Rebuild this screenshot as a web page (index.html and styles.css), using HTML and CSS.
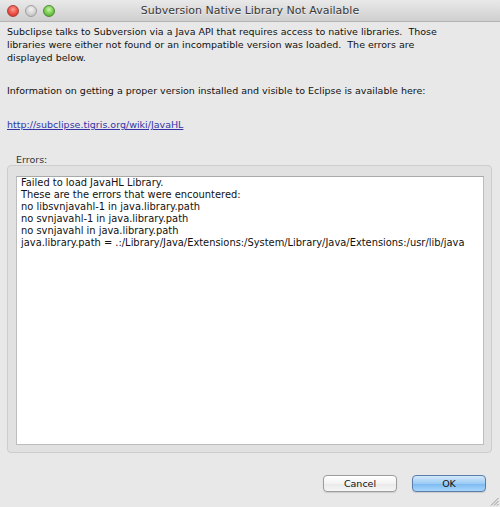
FILE: index.html
```html
<!DOCTYPE html>
<html lang="en">
<head>
    <meta charset="UTF-8">
    <meta name="viewport" content="width=device-width, initial-scale=1.0">
    <title>Subversion Native Library Not Available</title>
    <link rel="stylesheet" href="styles.css">
</head>
<body>
    <div class="window">
        <div class="titlebar">
            <div class="lights">
                <span class="light close"></span>
                <span class="light minimize"></span>
                <span class="light zoom"></span>
            </div>
            <div class="title">Subversion Native Library Not Available</div>
            <div></div>
        </div>

        <div class="content">
            <p class="message">Subclipse talks to Subversion via a Java API that requires access to native libraries.&nbsp; Those<br>libraries were either not found or an incompatible version was loaded.&nbsp; The errors are<br>displayed below.</p>
            <p class="info">Information on getting a proper version installed and visible to Eclipse is available here:</p>
            <a class="link" href="#">http://subclipse.tigris.org/wiki/JavaHL</a>

            <div class="errors-label">Errors:</div>
            <div class="errors-group">
                <div class="errors-box">Failed to load JavaHL Library.
These are the errors that were encountered:
no libsvnjavahl-1 in java.library.path
no svnjavahl-1 in java.library.path
no svnjavahl in java.library.path
java.library.path = .:/Library/Java/Extensions:/System/Library/Java/Extensions:/usr/lib/java</div>
            </div>

            <div class="buttons">
                <button class="btn cancel-btn">Cancel</button>
                <button class="btn ok-btn">OK</button>
            </div>
        </div>

        <svg class="grip" width="9" height="9" viewBox="0 0 9 9">
            <path d="M8.5 1 L1 8.5 M8.5 4 L4 8.5 M8.5 7 L7 8.5" stroke="#9a9a9a" stroke-width="1"/>
        </svg>
    </div>
</body>
</html>
```

FILE: styles.css
```css
* {
    margin: 0;
    padding: 0;
    box-sizing: border-box;
}

body {
    background: #e8e8e8;
    font-family: 'DejaVu Sans', Verdana, sans-serif;
    font-size: 9.5px;
    color: #111;
}

.window {
    position: relative;
    width: 500px;
    height: 507px;
    background: #e8e8e8;
    overflow: hidden;
}

/* title bar */
.titlebar {
    display: grid;
    grid-template-columns: 1fr auto 1fr;
    align-items: center;
    height: 22px;
    background: linear-gradient(#e9e9e9, #cfcfcf);
    border-bottom: 1px solid #b3b3b3;
}

.lights {
    display: flex;
    gap: 6px;
    padding-left: 7px;
}

.light {
    width: 12px;
    height: 12px;
    border-radius: 50%;
}

.light.close {
    background: radial-gradient(circle at 50% 35%, #ff9d94, #e8473c 60%, #b8332a);
    border: 1px solid #a9433b;
}

.light.minimize {
    background: radial-gradient(circle at 50% 35%, #f4f4f4, #cfcfcf 60%, #b5b5b5);
    border: 1px solid #9f9f9f;
}

.light.zoom {
    background: radial-gradient(circle at 50% 35%, #c8f5a8, #6cc545 60%, #4c9a2c);
    border: 1px solid #4f8a35;
}

.title {
    font-size: 11px;
    color: #3a3a3a;
    text-shadow: 0 1px 0 rgba(255, 255, 255, 0.6);
}

/* dialog body */
.content {
    padding: 3px 8px 0 7px;
    line-height: 13px;
}

.info {
    margin-top: 20px;
}

.link {
    display: block;
    margin-top: 21px;
    color: #3434a8;
    text-decoration: underline;
}

.errors-label {
    margin-top: 23px;
    padding-left: 9px;
    line-height: 11px;
    color: #333;
}

.errors-group {
    display: flex;
    flex-direction: column;
    height: 288px;
    padding: 10px 7px 7px 8px;
    background: #e1e1e1;
    border: 1px solid #cdcdcd;
    border-radius: 4px;
}

.errors-box {
    flex: 1;
    padding: 0 4px;
    background: #fff;
    border: 1px solid #bdbdbd;
    border-top-color: #a9a9a9;
    font-size: 9.9px;
    line-height: 12px;
    white-space: pre;
}

.buttons {
    display: flex;
    justify-content: flex-end;
    gap: 15px;
    margin-top: 22px;
    margin-right: 6px;
}

.btn {
    height: 17px;
    font-family: inherit;
    font-size: 9.5px;
    color: #111;
    border-radius: 4px;
    box-shadow: 0 1px 1px rgba(0, 0, 0, 0.12);
}

.cancel-btn {
    width: 74px;
    background: linear-gradient(#ffffff, #f3f3f3 50%, #e9e9e9 51%, #f6f6f6);
    border: 1px solid #9c9c9c;
}

.ok-btn {
    width: 74px;
    background: linear-gradient(#d4e9fb, #9ccbf5 50%, #7ab8f2 51%, #a9d6fb);
    border: 1px solid #5a7ea9;
}

.grip {
    position: absolute;
    right: 1px;
    bottom: 1px;
}
```
